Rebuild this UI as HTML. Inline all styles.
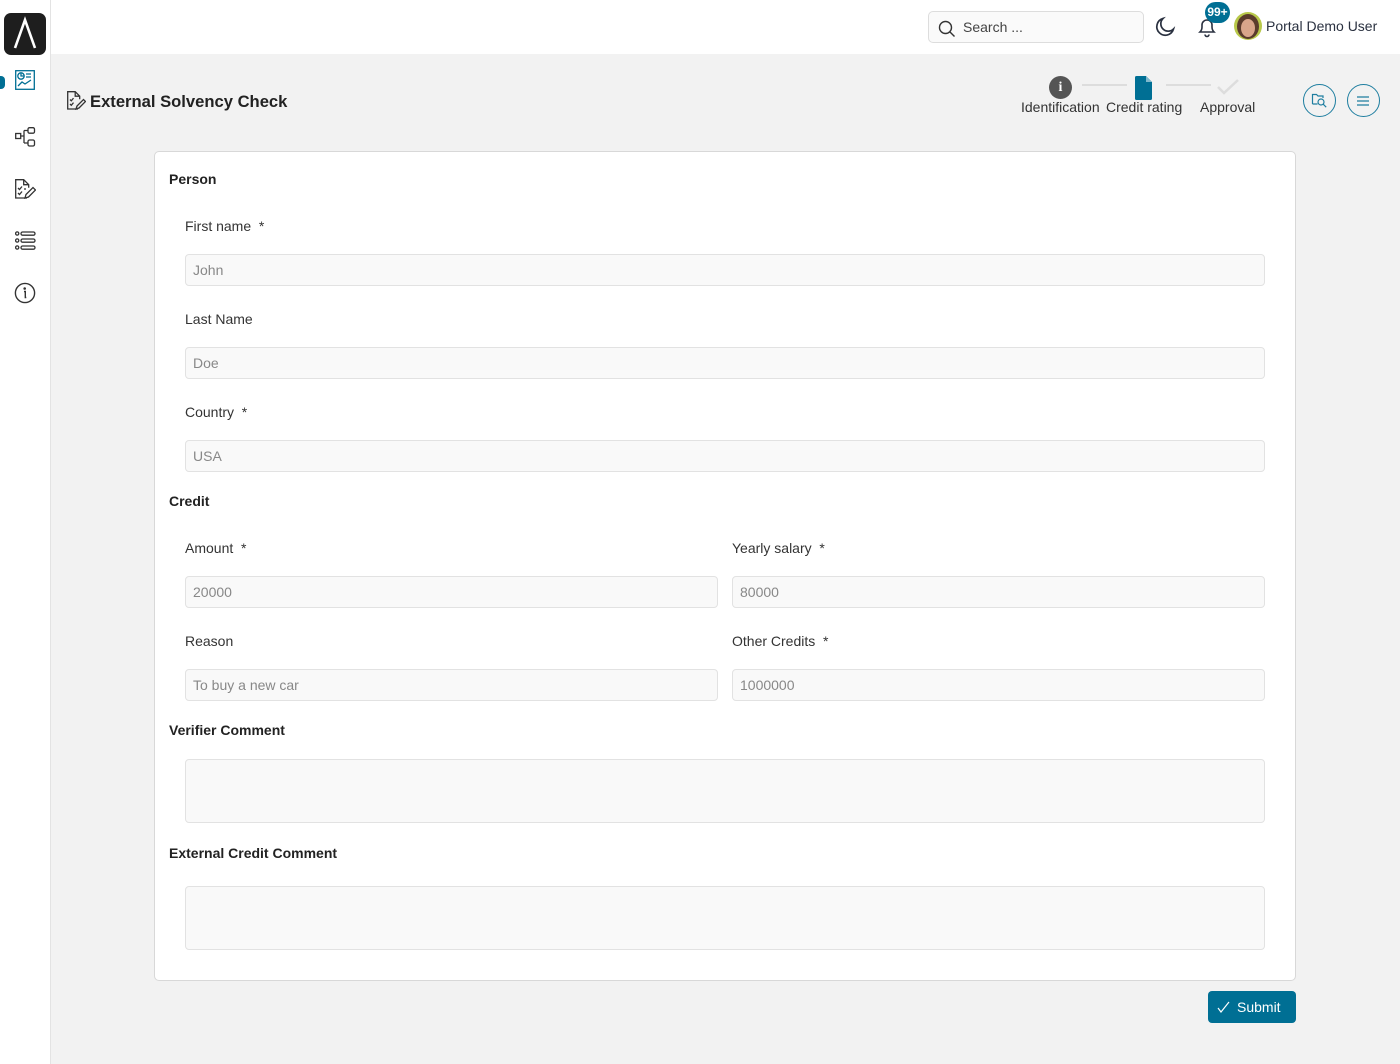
<!DOCTYPE html>
<html><head><meta charset="utf-8"><style>
*{box-sizing:border-box;margin:0;padding:0}
body{width:1400px;height:1064px;background:#f2f2f2;font-family:"Liberation Sans",sans-serif;color:#333;position:relative;overflow:hidden}
.abs{position:absolute}
.side{left:0;top:0;width:51px;height:1064px;background:#fff;border-right:1px solid #e3e3e3}
.top{left:51px;top:0;width:1349px;height:54px;background:#fff}
.lbl{position:absolute;font-size:14px;color:#333}
.inp{position:absolute;height:32px;background:#f9f9f9;border:1px solid #e2e2e2;border-radius:4px;font-size:14px;color:#888;padding:7px 7px;line-height:16px}
.sec{position:absolute;font-size:14px;font-weight:bold;color:#222}
.ic{position:absolute}
</style></head><body>
<div class="abs side"></div>
<div class="abs top"></div>
<div class="abs" style="left:4px;top:13px;width:42px;height:42px;background:#1e1e1e;border-radius:7px"></div>
<svg class="ic" style="left:4px;top:13px" width="42" height="42"><path d="M11 35 L21 7 L31 35" stroke="#fff" stroke-width="2.6" fill="none"/></svg>
<div class="abs" style="left:0;top:76px;width:5px;height:13px;background:#006f94;border-radius:0 4px 4px 0"></div>
<svg class="ic" style="left:15px;top:70px" width="20" height="20" fill="none" stroke="#006f94" stroke-width="1.3"><rect x="0.7" y="0.7" width="18.6" height="18.6"/><circle cx="6" cy="6" r="3.2"/><path d="M6 3v3h3M11 4h5M11 7h5M3 16l4-4 3 2 6-4"/></svg>
<svg class="ic" style="left:15px;top:127px" width="21" height="20" fill="none" stroke="#333" stroke-width="1.3"><rect x="0.7" y="6.5" width="5" height="5"/><rect x="13" y="0.7" width="6.5" height="5.5" rx="1.5"/><rect x="13" y="13" width="6.5" height="6" rx="1.5"/><path d="M5.7 9h3.5M9 3.5v12.5M9 3.5h4M9 16h4"/></svg>
<svg class="ic" style="left:15px;top:179px" width="21" height="20" fill="none" stroke="#333" stroke-width="1.3"><path d="M12 19H0.7V0.7h8l5 5v3"/><path d="M8.7 0.7v5h5"/><path d="M3 9l1.5 1.5 2.5-3M3 14l1.5 1.5 2.5-3M9 10h2"/><path d="M10 19l1-3.5 7-7 2.5 2.5-7 7z"/></svg>
<svg class="ic" style="left:15px;top:231px" width="21" height="20" fill="none" stroke="#333" stroke-width="1.3"><circle cx="2.2" cy="2.5" r="1.6"/><circle cx="2.2" cy="9.5" r="1.6"/><circle cx="2.2" cy="16.5" r="1.6"/><rect x="6" y="1" width="14" height="3.2" rx="1.6"/><rect x="6" y="8" width="14" height="3.2" rx="1.6"/><rect x="6" y="15" width="14" height="3.2" rx="1.6"/></svg>
<svg class="ic" style="left:14px;top:282px" width="22" height="22" fill="none" stroke="#333" stroke-width="1.4"><circle cx="11" cy="11" r="9.6"/><path d="M10 9.5h1.3v6h1"/><circle cx="10.7" cy="6.5" r="0.6" fill="#333"/></svg>
<div class="abs" style="left:928px;top:11px;width:216px;height:32px;border:1px solid #ddd;border-radius:5px;background:#fafafa"></div>
<svg class="ic" style="left:938px;top:20px" width="18" height="18" fill="none" stroke="#333" stroke-width="1.4"><circle cx="7.5" cy="7.5" r="6"/><path d="M12 12l4.5 4.5"/></svg>
<div class="abs" style="left:963px;top:19px;font-size:14px;color:#444">Search ...</div>
<svg class="ic" style="left:1154px;top:16px" width="22" height="22" fill="none" stroke="#2a3140" stroke-width="1.7"><path d="M9 2.5A8.5 8.5 0 1 0 19.5 13 7 7 0 0 1 9 2.5z"/></svg>
<svg class="ic" style="left:1196px;top:16px" width="22" height="22" fill="none" stroke="#2a3140" stroke-width="1.6"><path d="M4 16c1.5-1.5 2-3 2-5V9a5 5 0 0 1 10 0v2c0 2 .5 3.5 2 5z M9 18.5a2 2 0 0 0 4 0"/></svg>
<div class="abs" style="left:1205px;top:2px;width:25px;height:21px;border-radius:11px;background:#006f94;color:#fff;font-size:12px;font-weight:bold;text-align:center;line-height:21px">99+</div>
<div class="abs" style="left:1234px;top:12px;width:28px;height:28px;border-radius:50%;background:#b8c84a"></div>
<div class="abs" style="left:1237px;top:14px;width:22px;height:25px;border-radius:50%;background:#5a3b2c"></div>
<div class="abs" style="left:1241px;top:19px;width:14px;height:18px;border-radius:50%;background:#d9a58a"></div>
<div class="abs" style="left:1266px;top:18px;font-size:14px;color:#2a3140">Portal Demo User</div>
<svg class="ic" style="left:67px;top:91px" width="19" height="19" fill="none" stroke="#333" stroke-width="1.3"><path d="M11 18H0.7V0.7h7.5l4.5 4.5v3"/><path d="M8.2 0.7v4.5h4.5"/><path d="M3 8.5l1.3 1.3 2.2-2.7M3 13l1.3 1.3 2.2-2.7"/><path d="M9 18l1-3 6.5-6.5 2 2L12 17z"/></svg>
<div class="abs" style="left:90px;top:92px;font-size:16.6px;font-weight:bold;color:#222">External Solvency Check</div>
<div class="abs" style="left:1049px;top:76px;width:23px;height:23px;border-radius:50%;background:#555;color:#fff;font-weight:bold;font-size:14px;text-align:center;line-height:23px;font-family:'Liberation Serif',serif">i</div>
<div class="abs" style="left:1082px;top:84px;width:45px;height:2px;background:#ddd"></div>
<svg class="ic" style="left:1135px;top:76px" width="18" height="24"><path d="M1.5 0H11l6 6v16.5a1.5 1.5 0 0 1-1.5 1.5h-14A1.5 1.5 0 0 1 0 22.5V1.5A1.5 1.5 0 0 1 1.5 0z" fill="#006f94"/><path d="M11 0v6h6" fill="#7fb8cc"/></svg>
<div class="abs" style="left:1166px;top:84px;width:45px;height:2px;background:#ddd"></div>
<svg class="ic" style="left:1217px;top:79px" width="22" height="18" fill="none" stroke="#ddd" stroke-width="2.5"><path d="M1 8l6 6L21 1"/></svg>
<div class="abs" style="left:1021px;top:99px;font-size:14px;color:#333">Identification</div>
<div class="abs" style="left:1106px;top:99px;font-size:14px;color:#333">Credit rating</div>
<div class="abs" style="left:1200px;top:99px;font-size:14px;color:#333">Approval</div>
<div class="abs" style="left:1303px;top:84px;width:33px;height:33px;border:1.5px solid #1e7ea0;border-radius:50%"></div>
<svg class="ic" style="left:1311px;top:92px" width="18" height="18" fill="none" stroke="#1e7ea0" stroke-width="1.2"><path d="M1.5 12V2.5h4l1.5 1.5h5v2M1.5 12h5"/><circle cx="10" cy="10" r="3"/><path d="M12.2 12.2l3 3"/></svg>
<div class="abs" style="left:1347px;top:84px;width:33px;height:33px;border:1.5px solid #1e7ea0;border-radius:50%"></div>
<svg class="ic" style="left:1356px;top:95px" width="14" height="12" stroke="#1e7ea0" stroke-width="1.3"><path d="M1 2h12M1 6h12M1 10h12"/></svg>
<div class="abs" style="left:154px;top:151px;width:1142px;height:830px;background:#fff;border:1px solid #d8d8d8;border-radius:5px"></div>
<div class="sec" style="left:169px;top:171px">Person</div>
<div class="lbl" style="left:185px;top:218px">First name&nbsp; *</div>
<div class="inp" style="left:185px;top:254px;width:1080px">John</div>
<div class="lbl" style="left:185px;top:311px">Last Name</div>
<div class="inp" style="left:185px;top:347px;width:1080px">Doe</div>
<div class="lbl" style="left:185px;top:404px">Country&nbsp; *</div>
<div class="inp" style="left:185px;top:440px;width:1080px">USA</div>
<div class="sec" style="left:169px;top:493px">Credit</div>
<div class="lbl" style="left:185px;top:540px">Amount&nbsp; *</div>
<div class="inp" style="left:185px;top:576px;width:533px">20000</div>
<div class="lbl" style="left:732px;top:540px">Yearly salary&nbsp; *</div>
<div class="inp" style="left:732px;top:576px;width:533px">80000</div>
<div class="lbl" style="left:185px;top:633px">Reason</div>
<div class="inp" style="left:185px;top:669px;width:533px">To buy a new car</div>
<div class="lbl" style="left:732px;top:633px">Other Credits&nbsp; *</div>
<div class="inp" style="left:732px;top:669px;width:533px">1000000</div>
<div class="sec" style="left:169px;top:722px">Verifier Comment</div>
<div class="inp" style="left:185px;top:759px;width:1080px;height:64px"></div>
<div class="sec" style="left:169px;top:845px">External Credit Comment</div>
<div class="inp" style="left:185px;top:886px;width:1080px;height:64px"></div>
<div class="abs" style="left:1208px;top:991px;width:88px;height:32px;background:#006f94;border-radius:4px;color:#fff;font-size:14px;line-height:32px;padding-left:29px">Submit</div>
<svg class="ic" style="left:1217px;top:1000px" width="14" height="14" fill="none" stroke="#fff" stroke-width="1.2"><path d="M1 8l3 4L12 2"/></svg>
</body></html>
